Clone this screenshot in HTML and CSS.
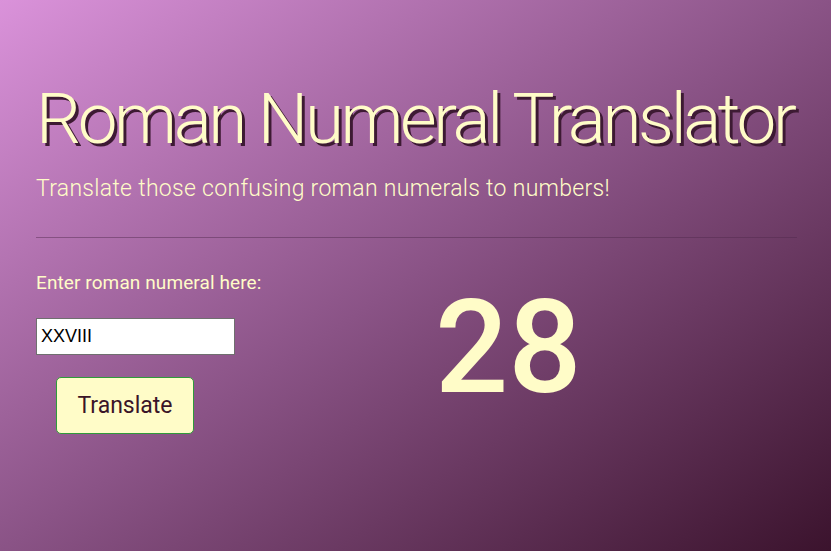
FILE: index.html
```html
<!DOCTYPE html>
<html lang="en">
<head>
<meta charset="utf-8">
<title>Roman Numeral Translator</title>
<link rel="stylesheet" href="styles.css">
</head>
<body>
<main class="page">
  <header class="hero">
    <h1 class="title">Roman Numeral Translator</h1>
    <p class="subtitle">Translate those confusing roman numerals to numbers!</p>
  </header>
  <hr class="divider">
  <section class="translator">
    <form class="form">
      <label class="label" for="numeral">Enter roman numeral here:</label>
      <input class="input" id="numeral" type="text" value="XXVIII">
      <button class="button" type="button">Translate</button>
    </form>
    <div class="result">28</div>
  </section>
</main>
</body>
</html>
```
FILE: styles.css
```css
html, body {
  margin: 0;
  height: 100%;
}
body {
  background: linear-gradient(to bottom right, #da92da 0%, #8a5386 50%, #3b132d 100%);
  font-family: Roboto, "Noto Sans", sans-serif;
  color: #fffcc8;
}
.page {
  padding: 75px 34px 0 36px;
}
.title {
  margin: 0;
  font-size: 71px;
  font-weight: 300;
  line-height: 88px;
  letter-spacing: -3.4px;
  white-space: nowrap;
  text-shadow: 3px 3px 0 #3d1a33;
}
.subtitle {
  margin: 11px 0 0;
  font-size: 23px;
  font-weight: 300;
  line-height: 30px;
  letter-spacing: 0.3px;
}
.divider {
  margin: 33px 0 0;
  border: 0;
  border-top: 1px solid rgba(80, 40, 75, 0.45);
  height: 0;
}
.translator {
  display: flex;
  align-items: flex-start;
  margin-top: 34px;
}
.form {
  display: flex;
  flex-direction: column;
  align-items: flex-start;
  width: 385px;
}
.label {
  font-size: 19px;
  line-height: 22px;
  letter-spacing: 0.1px;
}
.input {
  margin-top: 24px;
  width: 199px;
  height: 37px;
  box-sizing: border-box;
  border: 1px solid #6f6f6f;
  padding: 0 4px;
  font-family: "Liberation Sans", Arial, sans-serif;
  font-size: 18px;
  color: #000;
  background: #fff;
}
.button {
  margin: 22px 0 0 20px;
  width: 138px;
  height: 57px;
  border: 1px solid #2f9a3a;
  border-radius: 5px;
  background: #fffcc8;
  color: #3a1428;
  font-family: Roboto, sans-serif;
  font-size: 23px;
}
.result {
  margin-top: 11px;
  font-size: 129px;
  font-weight: 500;
  line-height: 129px;
  padding-left: 14px;
}
```
